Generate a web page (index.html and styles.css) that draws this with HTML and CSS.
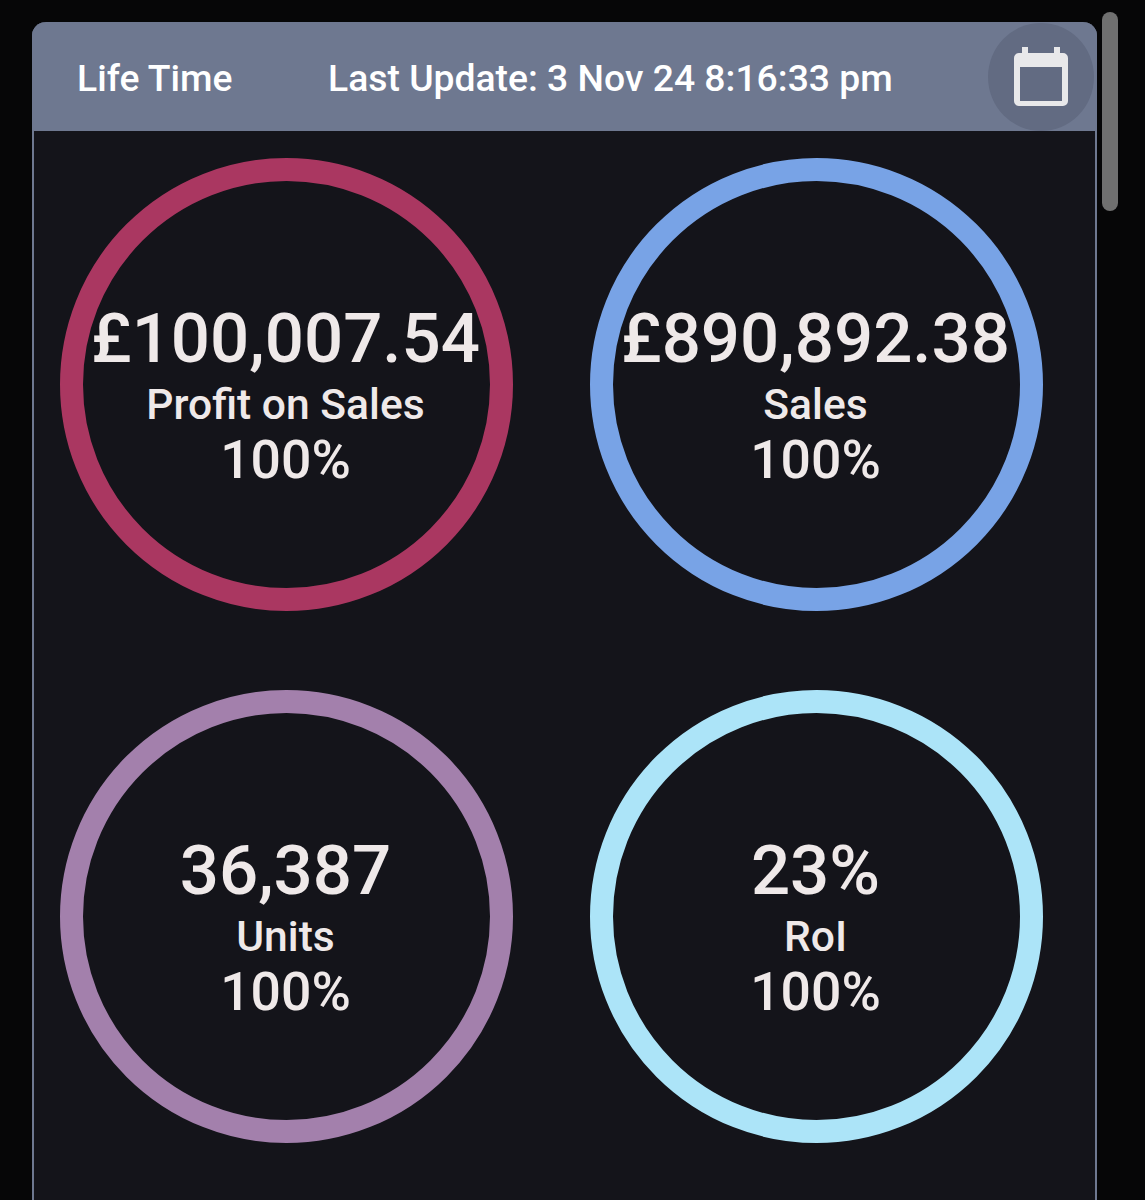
FILE: index.html
```html
<!DOCTYPE html>
<html>
    <head>
        <title>Life Time</title>
        <meta name="viewport" content="width=device-width, initial-scale=1">
        <link rel="stylesheet" href="styles.css">
    </head>
    <body>
        <div class="scrollbar"></div>

        <div class="card">
            <div class="card-header">
                <span class="period">Life Time</span>
                <span class="updated">Last Update: 3 Nov 24 8:16:33 pm</span>
                <button class="date-btn" aria-label="Pick date">
                    <svg viewBox="0 0 54 59" width="54" height="59">
                        <path fill="#e8e8ea" fill-rule="evenodd" d="M8 0h6v6h26V0h6v6h3a5 5 0 0 1 5 5v43a5 5 0 0 1-5 5H5a5 5 0 0 1-5-5V11a5 5 0 0 1 5-5h3zM6 20v34h42V20z"/>
                    </svg>
                </button>
            </div>

            <div class="stats">
                <div class="ring ring-profit">
                    <div class="value">£100,007.54</div>
                    <div class="label">Profit on Sales</div>
                    <div class="percent">100%</div>
                </div>
                <div class="ring ring-sales">
                    <div class="value">£890,892.38</div>
                    <div class="label">Sales</div>
                    <div class="percent">100%</div>
                </div>
                <div class="ring ring-units">
                    <div class="value">36,387</div>
                    <div class="label">Units</div>
                    <div class="percent">100%</div>
                </div>
                <div class="ring ring-roi">
                    <div class="value">23%</div>
                    <div class="label">RoI</div>
                    <div class="percent">100%</div>
                </div>
            </div>
        </div>
    </body>
</html>
```

FILE: styles.css
```css
* {
    box-sizing: border-box;
}
html, body {
    height: 1200px;
    overflow: hidden;
}
body {
    margin: 0;
    padding: 22px 48px 0 32px;
    background-color: #060607;
    font-family: Roboto, "Liberation Sans", sans-serif;
    font-weight: 500;
    color: #efe9e9;
}
.scrollbar {
    position: absolute;
    top: 12px;
    left: 1102px;
    width: 16px;
    height: 199px;
    border-radius: 8px;
    background-color: #707070;
}
.card {
    height: 1300px;
    border: 2px solid #6e7890;
    border-top: none;
    border-radius: 14px 14px 0 0;
    background-color: #14141a;
}
.card-header {
    display: flex;
    align-items: center;
    height: 109px;
    margin: 0 -2px;
    padding: 0 3px 0 45px;
    border-radius: 14px 14px 0 0;
    background-color: #6e7890;
    color: #fff;
    font-size: 37.3px;
}
.period {
    width: 251px;
    padding-top: 2px;
}
.updated {
    flex: 1;
    padding-top: 2px;
}
.date-btn {
    display: flex;
    align-items: center;
    justify-content: center;
    width: 106px;
    height: 108px;
    padding: 0;
    border: none;
    border-radius: 50%;
    background-color: #626b82;
}
.stats {
    display: grid;
    grid-template-columns: 453px 453px;
    column-gap: 77px;
    row-gap: 79px;
    padding: 27px 0 0 26px;
}
.ring {
    display: flex;
    flex-direction: column;
    align-items: center;
    justify-content: center;
    height: 453px;
    padding: 20px 2px 0 0;
    border: 23px solid;
    border-radius: 50%;
    white-space: nowrap;
}
.ring-profit { border-color: #aa3761; }
.ring-sales { border-color: #78a3e6; }
.ring-units { border-color: #a380ac; }
.ring-roi { border-color: #ace4f8; }
.value {
    font-size: 69px;
    line-height: 72px;
}
.label {
    font-size: 42.6px;
    line-height: 58px;
}
.percent {
    font-size: 53.5px;
    line-height: 54px;
}
```
